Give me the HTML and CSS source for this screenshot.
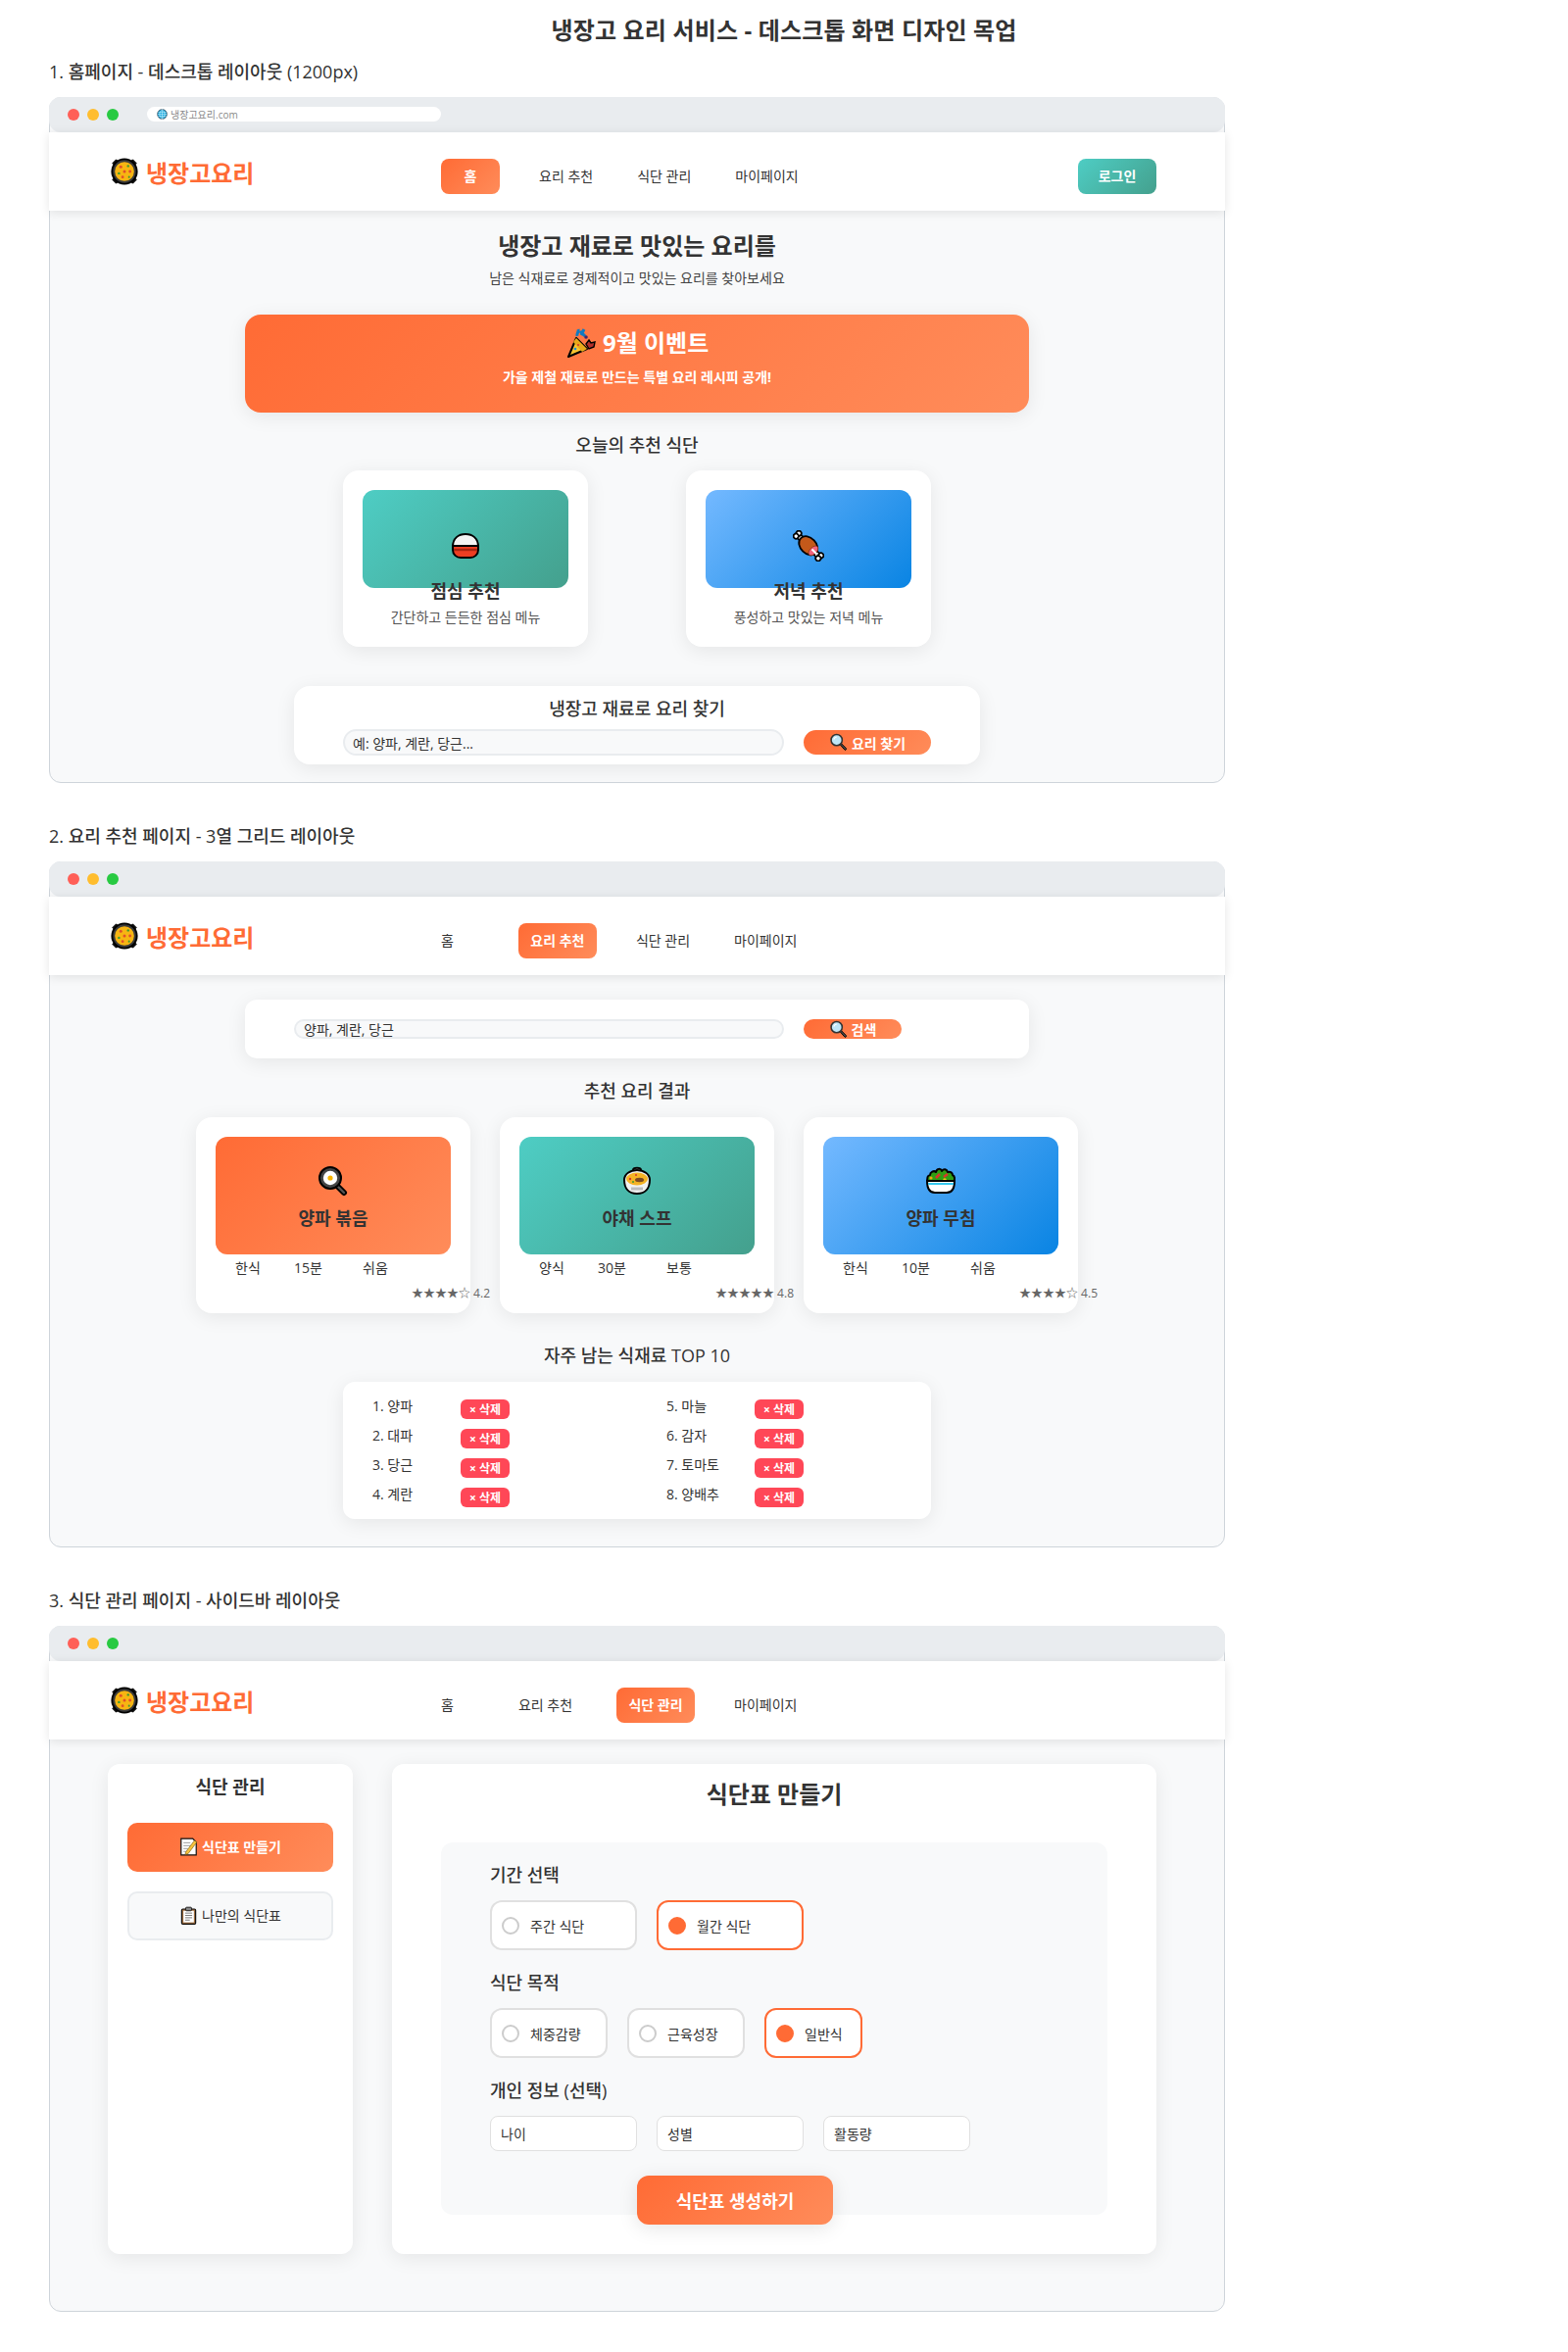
FILE: index.html
```html
<!DOCTYPE html>
<html lang="ko">
<head>
  <meta charset="UTF-8">
  <meta name="viewport" content="width=device-width, initial-scale=1.0">
  <title>냉장고 요리 서비스 - 데스크톱 화면 디자인 목업</title>
  <link rel="stylesheet" href="styles.css">
</head>
<body>
  <!-- 이모지 아이콘 모음 -->
  <svg class="sprite" xmlns="http://www.w3.org/2000/svg">
    <symbol id="i-pan" viewBox="0 0 32 32">
      <path d="M3 7l4-4 4 4-4 4zM29 25l-4 4-4-4 4-4zM25 3l4 4-4 4-4-4zM7 21l4 4-4 4-4-4z" fill="#111" stroke="#000"/>
      <circle cx="16" cy="16" r="13.5" fill="#3b3b3b" stroke="#000" stroke-width="2"/>
      <circle cx="16" cy="16" r="10.5" fill="#f7b512"/>
      <circle cx="12" cy="11" r="1.6" fill="#e2502a"/><circle cx="20" cy="10" r="1.3" fill="#3f9b2e"/><circle cx="16" cy="16" r="1.6" fill="#e2502a"/><circle cx="22" cy="16" r="1.5" fill="#e2502a"/><circle cx="10" cy="18" r="1.3" fill="#3f9b2e"/><circle cx="14" cy="22" r="1.5" fill="#e2502a"/><circle cx="21" cy="22" r="1.1" fill="#3f9b2e"/>
    </symbol>
    <symbol id="i-globe" viewBox="0 0 16 16">
      <circle cx="8" cy="8" r="7" fill="#14a9e0" stroke="#123" stroke-width="1"/>
      <path d="M1 8h14M2 5h12M2 11h12M8 1v14M8 1c-5 4-5 10 0 14M8 1c5 4 5 10 0 14" fill="none" stroke="#d9f2fb" stroke-width=".8"/>
    </symbol>
    <symbol id="i-party" viewBox="0 0 32 32">
      <path d="M3 30L11 11l11 11z" fill="#f9c531" stroke="#000" stroke-width="2" stroke-linejoin="round"/>
      <path d="M11 11l11 11-5 3-9-10z" fill="#e9a91b"/>
      <circle cx="10" cy="22" r="1.3" fill="#1f8fd6"/><circle cx="13" cy="18" r="1" fill="#d7352b"/>
      <path d="M12 9c-1-3 2-4 1-7M16 8l3-6M15 4l5 5" fill="none" stroke="#0f7ac0" stroke-width="3"/>
      <path d="M21 17l3-4 2 3 4-1-1 5-5 2z" fill="#b5302a" stroke="#000" stroke-width="1.4"/>
      <circle cx="21" cy="10" r="1.8" fill="#3b2a6f"/>
    </symbol>
    <symbol id="i-rice" viewBox="0 0 32 32">
      <path d="M3 17C3 8 9 4 16 4s13 4 13 13z" fill="#f4f4f4" stroke="#000" stroke-width="2"/>
      <path d="M3 16h26v4c0 5-4 8-8 8H11c-4 0-8-3-8-8z" fill="#ee3e22" stroke="#000" stroke-width="2"/>
      <path d="M4 20h24" stroke="#a92512" stroke-width="2.4"/>
    </symbol>
    <symbol id="i-meat" viewBox="0 0 32 32">
      <g transform="rotate(45 16 16)" stroke="#000" stroke-width="1.8">
        <path d="M1 16h30" stroke-width="6.5"/>
        <path d="M1 16h30" stroke="#fff" stroke-width="3.4"/>
        <circle cx="0" cy="14" r="2.6" fill="#fff"/><circle cx="0" cy="18" r="2.6" fill="#fff"/>
        <circle cx="32" cy="14" r="2.6" fill="#fff"/><circle cx="32" cy="18" r="2.6" fill="#fff"/>
        <path d="M5 16c0-5 5-8 11-8 5 0 10 3 11 8-1 5-6 8-11 8-6 0-11-3-11-8z" fill="#c4591a"/>
        <ellipse cx="23" cy="16" rx="3.4" ry="6" fill="#f2637e" stroke="#8c3412" stroke-width=".8"/>
        <path d="M21 16h7" stroke="#fff" stroke-width="2"/>
      </g>
    </symbol>
    <symbol id="i-search" viewBox="0 0 32 32">
      <path d="M19 20l8 9c2 1 3-1 2-3l-8-8z" fill="#4a4a4a" stroke="#000" stroke-width="1.6" stroke-linejoin="round"/>
      <circle cx="13" cy="12" r="9.5" fill="#bfe6f7" stroke="#333" stroke-width="2.6"/>
      <path d="M8 11c1-3 3-4 5-4" fill="none" stroke="#fff" stroke-width="2"/>
    </symbol>
    <symbol id="i-fry" viewBox="0 0 32 32">
      <path d="M20 21l7 7" stroke="#000" stroke-width="6" stroke-linecap="round"/>
      <path d="M21 22l6 6" stroke="#555" stroke-width="2.4" stroke-linecap="round"/>
      <circle cx="13" cy="13" r="11" fill="#444" stroke="#000" stroke-width="2"/>
      <circle cx="13" cy="13" r="7.2" fill="#fff"/>
      <circle cx="13" cy="13" r="2.6" fill="#f8b400"/>
    </symbol>
    <symbol id="i-soup" viewBox="0 0 32 32">
      <path d="M12 5c0-3 8-3 8 0" fill="#ddd" stroke="#000" stroke-width="2"/>
      <path d="M3 15c0-6 6-10 13-10s13 4 13 10c0 9-5 14-13 14S3 24 3 15z" fill="#f1f1f1" stroke="#000" stroke-width="2"/>
      <ellipse cx="16" cy="14" rx="11" ry="6.5" fill="#f5b324"/>
      <ellipse cx="18.5" cy="15" rx="4.5" ry="2.2" fill="#7b4a23"/>
      <circle cx="9" cy="14" r="1.2" fill="#d7352b"/><circle cx="15" cy="10" r="1" fill="#d7352b"/><circle cx="12" cy="17" r="1" fill="#3f9b2e"/>
      <path d="M10 24h12" stroke="#bdbdbd" stroke-width="3"/>
    </symbol>
    <symbol id="i-salad" viewBox="0 0 32 32">
      <path d="M3 17c-2-4 0-7 2-7 0-3 4-5 6-3 1-4 5-4 6-1 2-3 5-2 6 1 3-1 5 1 5 3 2 1 3 4 1 7z" fill="#2f9e12" stroke="#000" stroke-width="2" stroke-linejoin="round"/>
      <circle cx="6" cy="13" r="1.6" fill="#f3a712"/><path d="M11 13l4-4M19 12l4-3" stroke="#d7352b" stroke-width="2.6"/><circle cx="20" cy="15" r="1.8" fill="#f3c612"/>
      <path d="M2 16h28c0 8-3 12-8 12H10C5 28 2 24 2 16z" fill="#fff" stroke="#000" stroke-width="2"/>
      <path d="M3 19h26" stroke="#35c8ef" stroke-width="2"/>
    </symbol>
    <symbol id="i-memo" viewBox="0 0 32 32">
      <path d="M3 2h20l6 6v22H3z" fill="#fff" stroke="#111" stroke-width="2"/>
      <path d="M7 9h12M7 14h14M7 19h8M7 24h6" stroke="#999" stroke-width="1.6"/>
      <path d="M11 25L26 5l4 3-15 20-5 1z" fill="#f6c23d" stroke="#7a5a10"/>
    </symbol>
    <symbol id="i-board" viewBox="0 0 32 32">
      <rect x="4" y="5" width="24" height="26" rx="2" fill="#9c6b3d" stroke="#111" stroke-width="2"/>
      <rect x="7" y="8" width="18" height="20" fill="#fff"/>
      <rect x="11" y="2" width="10" height="6" rx="1.5" fill="#888" stroke="#111" stroke-width="1.5"/>
      <path d="M10 12h12M10 16h12M10 20h12M10 24h8" stroke="#777" stroke-width="1.6"/>
    </symbol>
  </svg>

  <h1 class="page-title">냉장고 요리 서비스 - 데스크톱 화면 디자인 목업</h1>

  <!-- 1. 홈페이지 -->
  <section class="mock">
    <h3 class="mock-label">1. 홈페이지 - 데스크톱 레이아웃 (1200px)</h3>
    <div class="frame">
      <div class="chrome">
        <span class="dot red"></span><span class="dot yellow"></span><span class="dot green"></span>
        <div class="address"><svg class="icon-addr"><use href="#i-globe"/></svg>냉장고요리.com</div>
      </div>
      <header class="topnav">
        <div class="logo"><svg class="icon-logo"><use href="#i-pan"/></svg>냉장고요리</div>
        <nav class="links">
          <a class="active">홈</a>
          <a class="gap-40">요리 추천</a>
          <a>식단 관리</a>
          <a>마이페이지</a>
        </nav>
        <button class="login">로그인</button>
      </header>
      <div class="home">
        <h2 class="hero-title">냉장고 재료로 맛있는 요리를</h2>
        <p class="hero-sub">남은 식재료로 경제적이고 맛있는 요리를 찾아보세요</p>
        <div class="banner">
          <h3><svg class="icon-party"><use href="#i-party"/></svg> 9월 이벤트</h3>
          <p>가을 제철 재료로 만드는 특별 요리 레시피 공개!</p>
        </div>
        <h4 class="section-title today">오늘의 추천 식단</h4>
        <div class="meal-row">
          <div class="meal-card">
            <div class="thumb teal"><svg class="icon-food"><use href="#i-rice"/></svg></div>
            <h4>점심 추천</h4>
            <p>간단하고 든든한 점심 메뉴</p>
          </div>
          <div class="meal-card">
            <div class="thumb blue"><svg class="icon-food"><use href="#i-meat"/></svg></div>
            <h4>저녁 추천</h4>
            <p>풍성하고 맛있는 저녁 메뉴</p>
          </div>
        </div>
        <div class="fridge-search">
          <h4>냉장고 재료로 요리 찾기</h4>
          <div class="search-row">
            <div class="field wide">예: 양파, 계란, 당근...</div>
            <button class="search-btn"><svg class="icon-btn"><use href="#i-search"/></svg> 요리 찾기</button>
          </div>
        </div>
      </div>
    </div>
  </section>

  <!-- 2. 요리 추천 -->
  <section class="mock">
    <h3 class="mock-label">2. 요리 추천 페이지 - 3열 그리드 레이아웃</h3>
    <div class="frame">
      <div class="chrome">
        <span class="dot red"></span><span class="dot yellow"></span><span class="dot green"></span>
      </div>
      <header class="topnav">
        <div class="logo"><svg class="icon-logo"><use href="#i-pan"/></svg>냉장고요리</div>
        <nav class="links">
          <a class="plain">홈</a>
          <a class="active gap-66">요리 추천</a>
          <a class="gap-40">식단 관리</a>
          <a>마이페이지</a>
        </nav>
      </header>
      <div class="recommend">
        <div class="search-bar">
          <div class="field slim">양파, 계란, 당근</div>
          <button class="search-btn slim"><svg class="icon-btn"><use href="#i-search"/></svg> 검색</button>
        </div>
        <h4 class="section-title results">추천 요리 결과</h4>
        <div class="recipe-grid">
          <div class="recipe">
            <div class="recipe-thumb orange"><svg class="icon-food"><use href="#i-fry"/></svg><h4>양파 볶음</h4></div>
            <div class="recipe-meta"><span>한식</span><span>15분</span><span>쉬움</span></div>
            <div class="rating">★★★★☆ 4.2</div>
          </div>
          <div class="recipe">
            <div class="recipe-thumb teal"><svg class="icon-food"><use href="#i-soup"/></svg><h4>야채 스프</h4></div>
            <div class="recipe-meta"><span>양식</span><span>30분</span><span>보통</span></div>
            <div class="rating">★★★★★ 4.8</div>
          </div>
          <div class="recipe">
            <div class="recipe-thumb blue"><svg class="icon-food"><use href="#i-salad"/></svg><h4>양파 무침</h4></div>
            <div class="recipe-meta"><span>한식</span><span>10분</span><span>쉬움</span></div>
            <div class="rating">★★★★☆ 4.5</div>
          </div>
        </div>
        <h4 class="section-title top10">자주 남는 식재료 TOP 10</h4>
        <div class="leftovers">
          <div class="leftover"><span>1. 양파</span><button class="del">× 삭제</button></div>
          <div class="leftover"><span>5. 마늘</span><button class="del">× 삭제</button></div>
          <div class="leftover"><span>2. 대파</span><button class="del">× 삭제</button></div>
          <div class="leftover"><span>6. 감자</span><button class="del">× 삭제</button></div>
          <div class="leftover"><span>3. 당근</span><button class="del">× 삭제</button></div>
          <div class="leftover"><span>7. 토마토</span><button class="del">× 삭제</button></div>
          <div class="leftover"><span>4. 계란</span><button class="del">× 삭제</button></div>
          <div class="leftover"><span>8. 양배추</span><button class="del">× 삭제</button></div>
        </div>
      </div>
    </div>
  </section>

  <!-- 3. 식단 관리 -->
  <section class="mock">
    <h3 class="mock-label">3. 식단 관리 페이지 - 사이드바 레이아웃</h3>
    <div class="frame">
      <div class="chrome">
        <span class="dot red"></span><span class="dot yellow"></span><span class="dot green"></span>
      </div>
      <header class="topnav">
        <div class="logo"><svg class="icon-logo"><use href="#i-pan"/></svg>냉장고요리</div>
        <nav class="links">
          <a class="plain">홈</a>
          <a class="gap-66">요리 추천</a>
          <a class="active">식단 관리</a>
          <a class="gap-40">마이페이지</a>
        </nav>
      </header>
      <div class="planner">
        <aside class="side">
          <h4>식단 관리</h4>
          <a class="side-btn on"><svg class="icon-btn"><use href="#i-memo"/></svg> 식단표 만들기</a>
          <a class="side-btn"><svg class="icon-btn"><use href="#i-board"/></svg> 나만의 식단표</a>
        </aside>
        <main class="plan-main">
          <h2>식단표 만들기</h2>
          <div class="plan-form">
            <div class="form-label">기간 선택</div>
            <div class="options">
              <label class="option w150"><i class="radio"></i>주간 식단</label>
              <label class="option w150 checked"><i class="radio"></i>월간 식단</label>
            </div>
            <div class="form-label">식단 목적</div>
            <div class="options">
              <label class="option w120"><i class="radio"></i>체중감량</label>
              <label class="option w120"><i class="radio"></i>근육성장</label>
              <label class="option w100 checked"><i class="radio"></i>일반식</label>
            </div>
            <div class="form-label">개인 정보 (선택)</div>
            <div class="options inputs">
              <div class="text-field">나이</div>
              <div class="text-field">성별</div>
              <div class="text-field">활동량</div>
            </div>
            <button class="generate">식단표 생성하기</button>
          </div>
        </main>
      </div>
    </div>
  </section>
</body>
</html>
```

FILE: styles.css
```css
* {
  box-sizing: border-box;
}
body {
  margin: 0;
  padding: 0 50px;
  background: #fff;
  color: #333;
  font-family: "Open Sans", "Noto Sans CJK KR", sans-serif;
}
button {
  font-family: inherit;
  border: none;
}
h1, h2, h3, h4, p {
  margin: 0;
}
svg {
  flex: none;
  vertical-align: middle;
}
.sprite {
  display: none;
}

.page-title {
  height: 60px;
  line-height: 62px;
  font-size: 24px;
  font-weight: 700;
  letter-spacing: 0.15px;
  text-align: center;
}
.mock {
  height: 780px;
}
.mock-label {
  height: 39px;
  font-size: 18px;
  line-height: 26px;
  font-weight: 500;
}

/* 브라우저 틀 */
.frame {
  width: 1200px;
  height: 700px;
  background: #f8f9fa;
  border: 1px solid #ced4da;
  border-radius: 12px;
}
.chrome {
  display: flex;
  align-items: center;
  gap: 8px;
  height: 36px;
  margin: -1px -1px 0;
  padding: 0 19px 1px;
  background: #e9ecef;
  border-radius: 12px;
}
.dot {
  width: 12px;
  height: 12px;
  border-radius: 50%;
}
.red { background: #ff5f57; }
.yellow { background: #ffbd2e; }
.green { background: #28ca42; }
.address {
  display: flex;
  align-items: center;
  gap: 3px;
  width: 300px;
  height: 15px;
  margin-left: 21px;
  padding-left: 10px;
  background: #fff;
  border-radius: 8px;
  color: #888;
  font-size: 10px;
}
.icon-addr {
  width: 11px;
  height: 11px;
}

/* 상단 메뉴 */
.topnav {
  position: relative;
  display: flex;
  align-items: center;
  height: 80px;
  margin: 0 -1px;
  padding: 0 70px 0 62px;
  background: #fff;
  box-shadow: 0 2px 10px rgba(0,0,0,0.1);
}
.logo {
  display: flex;
  align-items: center;
  gap: 7px;
  width: 338px;
  color: #ff6b35;
  font-size: 24px;
  font-weight: 700;
}
.icon-logo {
  width: 30px;
  height: 30px;
}
.links {
  display: flex;
  align-items: center;
  margin-top: 10px;
  font-size: 14px;
}
.links a {
  margin-left: 45px;
  padding-bottom: 3px;
  white-space: nowrap;
}
.links a:first-child {
  margin-left: 0;
}
.links a.active {
  display: flex;
  align-items: center;
  justify-content: center;
  height: 36px;
  border-radius: 8px;
  color: #fff;
  font-weight: 700;
  background: linear-gradient(135deg, #ff6b35, #ff8c5a);
}
.links a.active:first-child {
  width: 60px;
}
.links a.active:not(:first-child) {
  width: 80px;
}
.links a.gap-40 {
  margin-left: 40px;
}
.links a.gap-66 {
  margin-left: 66px;
}
.login {
  width: 80px;
  height: 36px;
  margin: 10px 0 0 auto;
  padding: 0 0 3px;
  border-radius: 8px;
  color: #fff;
  font-size: 14px;
  font-weight: 700;
  background: linear-gradient(135deg, #4ecdc4, #44a08d);
}

/* 홈 */
.home {
  display: flex;
  flex-direction: column;
  align-items: center;
}
.hero-title {
  margin-top: 20px;
  font-size: 24px;
  line-height: 32px;
  font-weight: 700;
}
.hero-sub {
  margin-top: 7px;
  font-size: 14px;
  line-height: 20px;
  color: #444;
}
.banner {
  width: 800px;
  height: 100px;
  margin-top: 27px;
  padding-top: 13px;
  text-align: center;
  color: #fff;
  border-radius: 16px;
  background: linear-gradient(135deg, #ff6b35, #ff8c5a);
  box-shadow: 0 4px 20px rgba(0,0,0,0.08);
}
.banner h3 {
  font-size: 24px;
  line-height: 32px;
  font-weight: 700;
}
.banner p {
  margin-top: 9px;
  font-size: 14px;
  line-height: 20px;
  font-weight: 700;
}
.icon-party {
  width: 32px;
  height: 32px;
  margin-top: -6px;
}
.section-title {
  font-size: 18px;
  line-height: 26px;
  font-weight: 500;
  text-align: center;
}
.today {
  margin-top: 20px;
}
.meal-row {
  display: flex;
  gap: 100px;
  margin-top: 13px;
}
.meal-card {
  width: 250px;
  height: 180px;
  padding: 20px;
  text-align: center;
  background: #fff;
  border-radius: 16px;
  box-shadow: 0 4px 20px rgba(0,0,0,0.08);
}
.thumb {
  display: flex;
  align-items: center;
  justify-content: center;
  height: 100px;
  padding-top: 14px;
  margin: 0;
  border-radius: 12px;
}
.teal { background: linear-gradient(135deg, #4ecdc4, #44a08d); }
.blue { background: linear-gradient(135deg, #74b9ff, #0984e3); }
.orange { background: linear-gradient(135deg, #ff6b35, #ff8c5a); }
.icon-food {
  width: 32px;
  height: 32px;
}
.meal-card h4 {
  margin-top: -10px;
  font-size: 18px;
  line-height: 26px;
  font-weight: 700;
}
.meal-card p {
  margin-top: 4px;
  font-size: 14px;
  line-height: 20px;
  color: #555;
}
.fridge-search {
  width: 700px;
  height: 80px;
  margin-top: 40px;
  padding: 10px 50px 0;
  text-align: center;
  background: #fff;
  border-radius: 16px;
  box-shadow: 0 4px 20px rgba(0,0,0,0.08);
}
.fridge-search h4 {
  font-size: 18px;
  line-height: 26px;
  font-weight: 500;
}
.search-row {
  display: flex;
  align-items: center;
  gap: 20px;
  margin-top: 8px;
}
.field {
  display: flex;
  align-items: center;
  padding-left: 8px;
  height: 27px;
  font-size: 14px;
  background: #f8f9fa;
  border: 2px solid #e9ecef;
  border-radius: 25px;
}
.field.wide {
  width: 450px;
}
.field.slim {
  width: 500px;
  height: 20px;
}
.search-btn {
  display: flex;
  align-items: center;
  justify-content: center;
  gap: 4px;
  width: 130px;
  height: 25px;
  padding: 0;
  color: #fff;
  font-size: 14px;
  font-weight: 700;
  border-radius: 25px;
  background: linear-gradient(135deg, #ff6b35, #ff8c5a);
}
.search-btn.slim {
  width: 100px;
  height: 20px;
}
.icon-btn {
  width: 19px;
  height: 19px;
}

/* 요리 추천 */
.recommend {
  display: flex;
  flex-direction: column;
  align-items: center;
}
.search-bar {
  display: flex;
  align-items: center;
  gap: 20px;
  width: 800px;
  height: 60px;
  margin-top: 25px;
  padding-left: 50px;
  background: #fff;
  border-radius: 12px;
  box-shadow: 0 4px 20px rgba(0,0,0,0.08);
}
.results {
  margin-top: 20px;
}
.recipe-grid {
  display: flex;
  gap: 30px;
  margin-top: 14px;
}
.recipe {
  width: 280px;
  height: 200px;
  padding: 20px 20px 0;
  background: #fff;
  border-radius: 16px;
  box-shadow: 0 4px 20px rgba(0,0,0,0.08);
}
.recipe-thumb {
  display: flex;
  flex-direction: column;
  align-items: center;
  height: 120px;
  padding-top: 29px;
  border-radius: 12px;
}
.recipe-thumb h4 {
  margin-top: 9px;
  font-size: 18px;
  line-height: 26px;
  font-weight: 700;
}
.recipe-meta {
  display: grid;
  grid-template-columns: 60px 70px auto;
  padding-left: 20px;
  margin-top: 3px;
  font-size: 14px;
  line-height: 22px;
}
.rating {
  margin: 6px 0 0 200px;
  font-size: 12px;
  line-height: 18px;
  color: #666;
  white-space: nowrap;
}
.top10 {
  margin-top: 30px;
}
.leftovers {
  display: grid;
  grid-template-columns: 300px 240px;
  grid-auto-rows: 20px;
  align-content: start;
  row-gap: 10px;
  width: 600px;
  height: 140px;
  margin-top: 14px;
  padding: 18px 30px 0;
  background: #fff;
  border-radius: 12px;
  box-shadow: 0 4px 20px rgba(0,0,0,0.08);
}
.leftover {
  display: flex;
  height: 20px;
  font-size: 14px;
  line-height: 14px;
}
.leftover span {
  width: 90px;
}
.del {
  width: 50px;
  height: 20px;
  padding: 0;
  color: #fff;
  font-size: 12px;
  font-weight: 700;
  background: #ff4757;
  border-radius: 6px;
}

/* 식단 관리 */
.planner {
  display: flex;
  gap: 40px;
  padding: 25px 0 0 59px;
}
.side {
  width: 250px;
  height: 500px;
  padding: 10px 20px;
  background: #fff;
  border-radius: 12px;
  box-shadow: 0 4px 20px rgba(0,0,0,0.08);
}
.side h4 {
  height: 40px;
  margin-bottom: 10px;
  font-size: 18px;
  line-height: 26px;
  font-weight: 700;
  text-align: center;
}
.side-btn {
  display: flex;
  align-items: center;
  justify-content: center;
  gap: 4px;
  height: 50px;
  margin-bottom: 20px;
  padding-bottom: 2px;
  font-size: 14px;
  background: #f8f9fa;
  border: 2px solid #e9ecef;
  border-radius: 10px;
}
.side-btn.on {
  color: #fff;
  font-weight: 700;
  border: none;
  background: linear-gradient(135deg, #ff6b35, #ff8c5a);
}
.plan-main {
  width: 780px;
  height: 500px;
  padding-top: 15px;
  background: #fff;
  border-radius: 12px;
  box-shadow: 0 4px 20px rgba(0,0,0,0.08);
}
.plan-main h2 {
  height: 65px;
  font-size: 24px;
  line-height: 32px;
  font-weight: 700;
  text-align: center;
}
.plan-form {
  width: 680px;
  height: 380px;
  margin-left: 50px;
  padding: 20px 50px 0;
  background: #f8f9fa;
  border-radius: 12px;
}
.form-label {
  height: 26px;
  font-size: 18px;
  line-height: 26px;
  font-weight: 500;
}
.options {
  display: flex;
  gap: 20px;
  margin: 13px 0 20px;
}
.options.inputs {
  margin-bottom: 25px;
}
.option {
  display: flex;
  align-items: center;
  gap: 11px;
  height: 51px;
  padding-left: 10px;
  font-size: 14px;
  background: #fff;
  border: 2px solid #e0e0e0;
  border-radius: 12px;
}
.w150 { width: 150px; }
.w120 { width: 120px; }
.w100 { width: 100px; }
.radio {
  width: 18px;
  height: 18px;
  border: 2px solid #ccc;
  border-radius: 50%;
}
.option.checked {
  border-color: #ff6b35;
}
.option.checked .radio {
  background: #ff6b35;
  border-color: #ff6b35;
}
.text-field {
  display: flex;
  align-items: center;
  width: 150px;
  height: 36px;
  padding-left: 10px;
  font-size: 14px;
  background: #fff;
  border: 1px solid #e0e0e0;
  border-radius: 8px;
}
.generate {
  display: block;
  width: 200px;
  height: 50px;
  margin-left: 150px;
  padding-bottom: 2px;
  color: #fff;
  font-size: 18px;
  font-weight: 700;
  border-radius: 12px;
  background: linear-gradient(135deg, #ff6b35, #ff8c5a);
  box-shadow: 0 4px 20px rgba(0,0,0,0.1);
}
```
